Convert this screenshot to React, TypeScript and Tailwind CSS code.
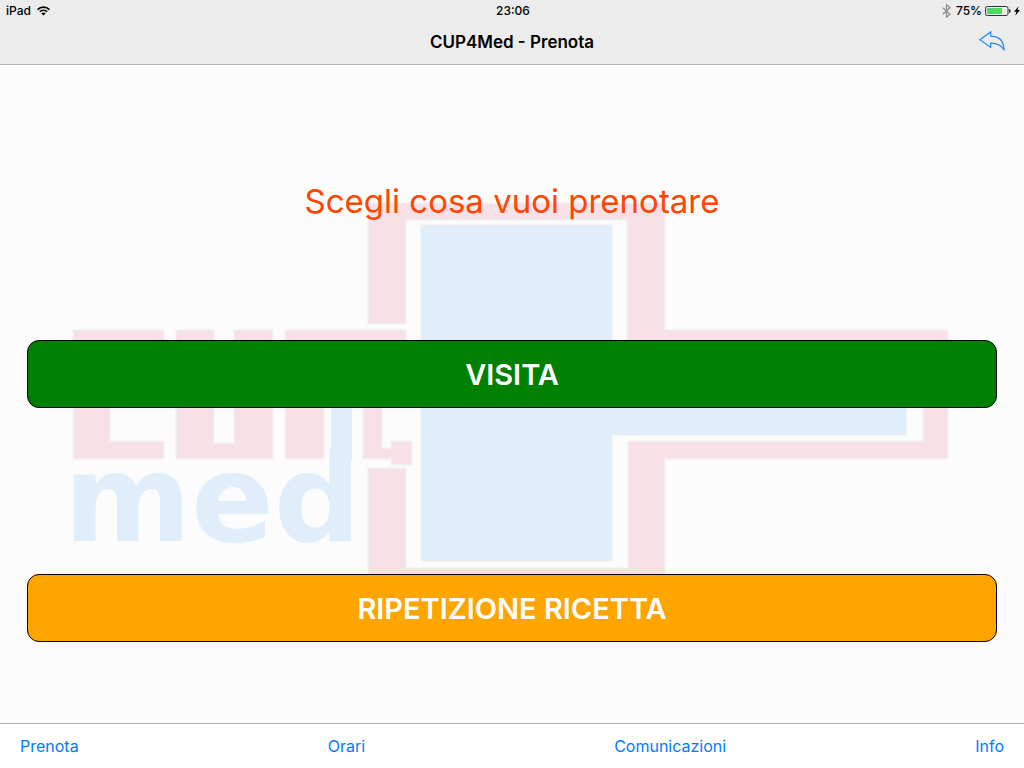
import { useState } from "react";

const tabs = ["Prenota", "Orari", "Comunicazioni", "Info"];

function StatusBar() {
  return (
    <div className="grid h-5 grid-cols-3 items-center pl-[6px] pr-1 pt-px text-xs font-medium text-black">
      <div className="flex items-center gap-[6px]">
        <span>iPad</span>
        <svg width="13" height="10" viewBox="0 0 13 10" fill="none" stroke="#000" strokeWidth="1.6" aria-hidden="true">
          <path d="M0.6 3.6C3.8 0.3 9.2 0.3 12.4 3.6" />
          <path d="M2.8 5.7C4.9 3.7 8.1 3.7 10.2 5.7" />
          <path d="M6.5 9.6L4.3 7.3C5.6 6.2 7.4 6.2 8.7 7.3Z" fill="#000" stroke="none" />
        </svg>
      </div>
      <span className="text-center">23:06</span>
      <div className="flex items-center justify-end gap-[3px]">
        <svg className="mr-0.5" width="9" height="14" viewBox="0 0 9 14" fill="none" stroke="#8e8e8e" strokeWidth="1.3" aria-hidden="true">
          <path d="M0.8 3.8L8 10.2L4.5 13.2V0.8L8 3.8L0.8 10.2" />
        </svg>
        <span>75%</span>
        <svg width="26" height="10" viewBox="0 0 26 10" aria-hidden="true">
          <rect x="0.5" y="0.5" width="22.5" height="9" rx="1.8" fill="none" stroke="#333" />
          <rect x="2" y="2" width="15" height="6" fill="#4cd964" />
          <path d="M24.2 3C25.2 3.3 25.5 4 25.5 5S25.2 6.7 24.2 7Z" fill="#000" />
        </svg>
        <svg width="6" height="10" viewBox="0 0 6 10" aria-hidden="true">
          <path d="M4.6 0.2L0 5.7H2.4L1.2 9.8L6 4.1H3.5Z" fill="#000" />
        </svg>
      </div>
    </div>
  );
}

function Logo() {
  return (
    <svg
      className="absolute inset-0 h-full w-full"
      viewBox="0 65 1024 658"
      preserveAspectRatio="xMidYMid meet"
      aria-hidden="true"
    >
      <g fill="#f7e1e7" stroke="#f0eeef" strokeWidth="3" paintOrder="stroke">
        {/* cross outline */}
        <path d="M369 323V204H664V331H947V458H664V585H369V469H405V569H629V442H924V346H628V219H405V323Z" />
        {/* red blocks on the left */}
        <path d="M74 331H163V346H109V442H163V458H74Z" />
        <path d="M177 331H213V444H235V331H272V458H177Z" />
        <path d="M286 331H405V346H323V458H286Z" />
        <path d="M364 346H381V449H392V442H411V464H392V458H364Z" />
      </g>
      <path d="M422 226H611V354H905V434H611V560H422Z" fill="#e0edfb" stroke="#eaeef0" strokeWidth="3" paintOrder="stroke" />
      <g fill="#e0edfb">
        <rect x="331" y="400" width="21" height="60" />
        <text x="64" y="541" fontSize="122" fontWeight="700" fontFamily="'DejaVu Sans', sans-serif">
          med
        </text>
      </g>
    </svg>
  );
}

export default function App() {
  const [tab, setTab] = useState("Prenota");

  return (
    <div className="flex min-h-screen flex-col bg-[#fcfcfc] font-['Inter',sans-serif]">
      <header className="border-b border-[#b2b2b2] bg-[#ececec]">
        <StatusBar />
        <div className="grid h-11 grid-cols-[1fr_auto_1fr] items-center px-[19px]">
          <h1 className="col-start-2 pt-0.5 text-[17px] font-semibold text-black">CUP4Med - Prenota</h1>
          <button type="button" aria-label="Indietro" className="justify-self-end pb-0.5">
            <svg width="26" height="20" viewBox="0 0 26 20" fill="none" stroke="#1a86ff" strokeWidth="1.2">
              <path d="M0.8 8.7L11.7 0.9V5.2C19.5 5.3 24.6 9.8 25 18.6C21.9 13.9 17.8 12.2 11.7 12.2V16.4Z" />
            </svg>
          </button>
        </div>
      </header>

      <main className="relative flex-1">
        <Logo />
        <div className="relative flex flex-col px-[27px] pb-20 pt-[116px]">
          <h2 className="text-center text-[33px] leading-10 text-[#ff4500]">Scegli cosa vuoi prenotare</h2>
          <button type="button" className="mt-[119px] h-[68px] rounded-xl border border-black bg-[#008000] pt-0.5 text-[29px] font-semibold text-white">
            VISITA
          </button>
          <button type="button" className="mt-[166px] h-[68px] rounded-xl border border-black bg-[#ffa500] pt-0.5 text-[29px] font-semibold text-white">
            RIPETIZIONE RICETTA
          </button>
        </div>
      </main>

      <nav className="flex h-[45px] items-center justify-between border-t border-[#b2b2b2] bg-white px-5">
        {tabs.map((t) => (
          <button key={t} type="button" aria-pressed={tab === t} onClick={() => setTab(t)} className="text-base text-[#007aff]">
            {t}
          </button>
        ))}
      </nav>
    </div>
  );
}
